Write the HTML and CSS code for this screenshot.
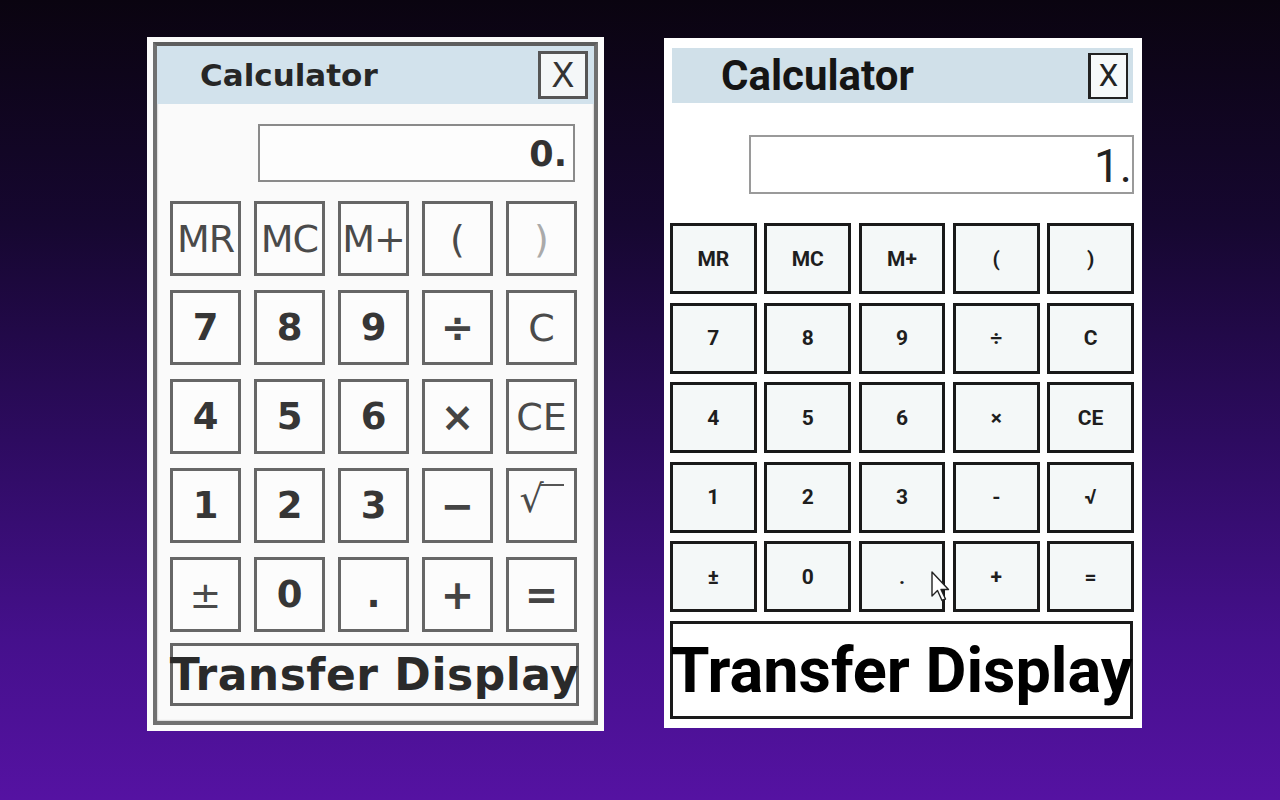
FILE: index.html
```html
<!DOCTYPE html>
<html lang="en">
<head>
    <meta charset="UTF-8">
    <meta name="viewport" content="width=device-width, initial-scale=1.0">
    <title>Calculator - before and after</title>
    <link rel="stylesheet" href="styles.css">
</head>
<body>
    <div class="stage">
        <!-- Oude versie (wazig, DejaVu) -->
        <div class="calc old">
            <div class="frame">
                <div class="titlebar">
                    <span class="title">Calculator</span>
                    <span class="close">X</span>
                </div>
                <div class="body">
                    <div class="display">0.</div>
                    <div class="keys">
                        <div class="key mem">MR</div>
                        <div class="key mem">MC</div>
                        <div class="key mem">M+</div>
                        <div class="key thin">(</div>
                        <div class="key thin faint">)</div>

                        <div class="key">7</div>
                        <div class="key">8</div>
                        <div class="key">9</div>
                        <div class="key op">÷</div>
                        <div class="key thin">C</div>

                        <div class="key">4</div>
                        <div class="key">5</div>
                        <div class="key">6</div>
                        <div class="key op">×</div>
                        <div class="key thin">CE</div>

                        <div class="key">1</div>
                        <div class="key">2</div>
                        <div class="key">3</div>
                        <div class="key op">−</div>
                        <div class="key thin sqrt"><span>√</span><span class="vinc"></span></div>

                        <div class="key thin">±</div>
                        <div class="key">0</div>
                        <div class="key">.</div>
                        <div class="key op">+</div>
                        <div class="key op">=</div>
                    </div>
                    <div class="transfer">Transfer Display</div>
                </div>
            </div>
        </div>

        <!-- Nieuwe versie (scherp, Roboto) -->
        <div class="calc new">
            <div class="titlebar">
                <span class="title">Calculator</span>
                <span class="close">X</span>
            </div>
            <div class="display">1.</div>
            <div class="keys">
                <div class="key">MR</div>
                <div class="key">MC</div>
                <div class="key">M+</div>
                <div class="key">(</div>
                <div class="key">)</div>

                <div class="key">7</div>
                <div class="key">8</div>
                <div class="key">9</div>
                <div class="key">÷</div>
                <div class="key">C</div>

                <div class="key">4</div>
                <div class="key">5</div>
                <div class="key">6</div>
                <div class="key">×</div>
                <div class="key">CE</div>

                <div class="key">1</div>
                <div class="key">2</div>
                <div class="key">3</div>
                <div class="key">-</div>
                <div class="key">√</div>

                <div class="key">±</div>
                <div class="key">0</div>
                <div class="key">.
                    <svg class="cursor" width="20" height="32" viewBox="0 0 20 32">
                        <path d="M1 1 L1 25 L6.5 19.5 L11 29.5 L14.5 28 L10 18.5 L17.5 18.5 Z" fill="#fff" stroke="#222" stroke-width="1.4" stroke-linejoin="round"/>
                    </svg>
                </div>
                <div class="key">+</div>
                <div class="key">=</div>
            </div>
            <div class="transfer">Transfer Display</div>
        </div>
    </div>
</body>
</html>
```

FILE: styles.css
```css
html, body {
    margin: 0;
    height: 100%;
}

body {
    background: linear-gradient(180deg, #0a0410 0%, #160730 28%, #2d0b60 55%, #45108c 80%, #5512a2 100%);
    overflow: hidden;
}

.stage {
    display: flex;
    align-items: flex-start;
    gap: 60px;
    padding: 37px 0 0 147px;
}

/* ---------- oude calculator ---------- */

.old {
    background: #fbfbfb;
    width: 457px;
    padding: 5px 6px 6px;
    box-sizing: border-box;
    font-family: "DejaVu Sans", Verdana, sans-serif;
    color: #3a3a3a;
}

.old .frame {
    border: 4px solid #707070;
    border-top-color: #5e5e5e;
    box-shadow: inset 0 0 2px rgba(0, 0, 0, 0.4);
    background: #fafafa;
}

.old .titlebar {
    display: flex;
    align-items: center;
    justify-content: space-between;
    height: 58px;
    background: #d2e2ec;
    padding: 0 6px 0 43px;
}

.old .title {
    font-weight: bold;
    font-size: 31px;
    color: #262626;
}

.old .close {
    width: 44px;
    height: 42px;
    border: 3px solid #555;
    background: #f4f7f8;
    display: flex;
    align-items: center;
    justify-content: center;
    font-size: 34px;
    color: #333;
}

.old .body {
    padding: 20px 19px 15px 13px;
}

.old .display {
    margin-left: auto;
    width: 307px;
    height: 54px;
    border: 2px solid #8a8a8a;
    background: #fdfdfd;
    text-align: right;
    font-weight: bold;
    font-size: 35px;
    line-height: 56px;
    padding-right: 6px;
    color: #333;
}

.old .keys {
    display: grid;
    grid-template-columns: repeat(5, 71px);
    grid-auto-rows: 75px;
    gap: 14px 13px;
    margin-top: 19px;
}

.old .key {
    border: 3px solid #666;
    background: #fcfcfc;
    display: flex;
    align-items: center;
    justify-content: center;
    font-weight: bold;
    font-size: 37px;
    color: #363636;
    white-space: nowrap;
}

.old .key.mem {
    font-weight: normal;
    font-size: 38px;
    color: #4a4a4a;
    letter-spacing: -1px;
}

.old .key.thin {
    font-weight: normal;
    font-size: 38px;
    color: #4a4a4a;
}

.old .key.faint {
    color: #aaa;
}

.old .key.op {
    font-size: 40px;
    color: #444;
}

.old .sqrt {
    align-items: flex-start;
    padding-top: 6px;
}

.old .sqrt .vinc {
    display: block;
    width: 24px;
    border-top: 2px solid #555;
    margin-top: 7px;
    margin-left: -4px;
}

.old .transfer {
    margin-top: 11px;
    width: 403px;
    height: 57px;
    border: 3px solid #666;
    display: flex;
    align-items: center;
    justify-content: center;
    font-weight: bold;
    font-size: 44px;
    color: #2a2a2a;
    white-space: nowrap;
    letter-spacing: 0.5px;
}

/* ---------- nieuwe calculator ---------- */

.new {
    background: #fff;
    width: 478px;
    height: 690px;
    box-sizing: border-box;
    padding: 10px 8px 0 6px;
    margin-top: 1px;
    font-family: Roboto, "Noto Sans", sans-serif;
    color: #1c1c1c;
}

.new .titlebar {
    display: flex;
    align-items: center;
    justify-content: space-between;
    height: 55px;
    margin-left: 2px;
    margin-right: 1px;
    background: #d0e0e9;
    padding: 0 5px 0 49px;
}

.new .title {
    font-weight: bold;
    font-size: 42px;
    color: #151515;
}

.new .close {
    width: 35px;
    height: 42px;
    border: 2px solid #222;
    border-left-width: 3px;
    background: #f6f9fa;
    display: flex;
    align-items: center;
    justify-content: center;
    font-size: 31px;
    color: #222;
}

.new .display {
    margin: 32px 0 0 auto;
    width: 381px;
    height: 55px;
    border: 2px solid #9a9a9a;
    text-align: right;
    font-size: 46px;
    line-height: 58px;
    color: #222;
}

.new .keys {
    display: grid;
    grid-template-columns: repeat(5, 1fr);
    grid-auto-rows: 71px;
    gap: 8.5px 7.5px;
    margin-top: 29px;
    width: 464px;
}

.new .key {
    position: relative;
    border: 3px solid #1a1a1a;
    background: #f4f8f8;
    display: flex;
    align-items: center;
    justify-content: center;
    font-weight: bold;
    font-size: 21px;
    color: #1e1e1e;
}

.new .cursor {
    position: absolute;
    left: 69px;
    top: 27px;
}

.new .transfer {
    margin-top: 9px;
    width: 463px;
    height: 98px;
    box-sizing: border-box;
    border: 3px solid #1a1a1a;
    display: flex;
    align-items: center;
    justify-content: center;
    font-weight: bold;
    font-size: 63px;
    color: #000;
    white-space: nowrap;
}
```
